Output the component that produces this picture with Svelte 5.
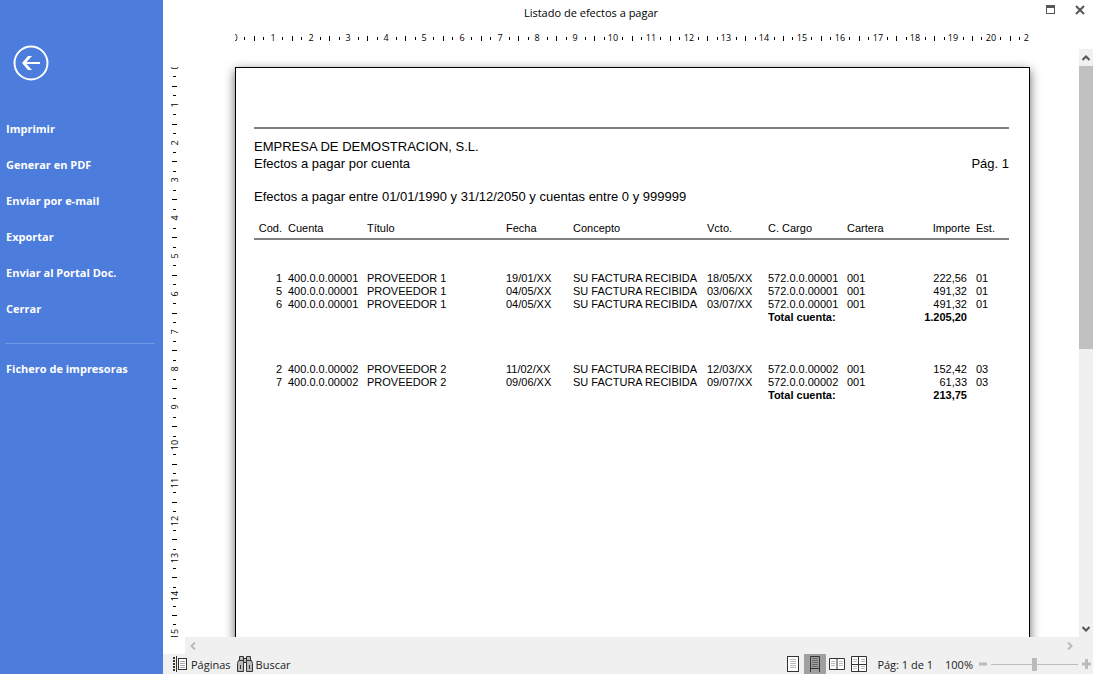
<script>
	const actions = ['Imprimir', 'Generar en PDF', 'Enviar por e-mail', 'Exportar', 'Enviar al Portal Doc.', 'Cerrar'];

	const groups = [
		{
			total: '1.205,20',
			rows: [
				['1', '400.0.0.00001', 'PROVEEDOR 1', '19/01/XX', 'SU FACTURA RECIBIDA', '18/05/XX', '572.0.0.00001', '001', '222,56', '01'],
				['5', '400.0.0.00001', 'PROVEEDOR 1', '04/05/XX', 'SU FACTURA RECIBIDA', '03/06/XX', '572.0.0.00001', '001', '491,32', '01'],
				['6', '400.0.0.00001', 'PROVEEDOR 1', '04/05/XX', 'SU FACTURA RECIBIDA', '03/07/XX', '572.0.0.00001', '001', '491,32', '01']
			]
		},
		{
			total: '213,75',
			rows: [
				['2', '400.0.0.00002', 'PROVEEDOR 2', '11/02/XX', 'SU FACTURA RECIBIDA', '12/03/XX', '572.0.0.00002', '001', '152,42', '03'],
				['7', '400.0.0.00002', 'PROVEEDOR 2', '09/06/XX', 'SU FACTURA RECIBIDA', '09/07/XX', '572.0.0.00002', '001', '61,33', '03']
			]
		}
	];

	const headings = ['Cod.', 'Cuenta', 'Título', 'Fecha', 'Concepto', 'Vcto.', 'C. Cargo', 'Cartera', 'Importe', 'Est.'];
	const columns = ['cod', 'cuenta', 'titulo', 'fecha', 'concepto', 'vcto', 'cargo', 'cartera', 'importe', 'est'];

	// one centimetre at 96 dpi
	const CM = 96 / 2.54;

	// quarter-centimetre marks; whole centimetres carry a number
	function marks(cm) {
		return Array.from({ length: cm * 4 + 1 }, (_, i) => ({
			pos: Math.round((i / 4) * CM),
			label: i % 4 === 0 ? i / 4 : null,
			half: i % 4 === 2
		}));
	}

	const across = marks(21);
	const down = marks(29);

	let zoom = $state(50);
	let view = $state(1);
</script>

<div class="window">
	<nav class="sidebar">
		<button class="back" aria-label="Volver">
			<svg width="36" height="36" viewBox="0 0 36 36" fill="none" stroke="#fff">
				<circle cx="18" cy="18" r="16.5" stroke-width="2" />
				<path d="M10.5 18H27" stroke-width="2" />
				<path d="M9 18L15 11H19L13.5 17V19L19 25H15Z" fill="#fff" stroke="none" />
			</svg>
		</button>
		<div class="actions">
			{#each actions as action}
				<button>{action}</button>
			{/each}
		</div>
		<hr />
		<button>Fichero de impresoras</button>
	</nav>

	<main>
		<header>
			<h1>Listado de efectos a pagar</h1>
			<div class="controls">
				<button aria-label="Maximizar">
					<svg width="10" height="10" viewBox="0 0 10 10"><path d="M0 0H9V9H0ZM1 3V8H8V3Z" fill="#555" fill-rule="evenodd" /></svg>
				</button>
				<button aria-label="Cerrar ventana">
					<svg width="10" height="10" viewBox="0 0 10 10"><path d="M1 1L9 9M9 1L1 9" stroke="#555" stroke-width="2" /></svg>
				</button>
			</div>
		</header>

		<div class="preview">
			<div class="ruler-top">
				<svg class="ruler" height="12">
					{#each across as m}
						{#if m.label !== null}
							<text x={m.pos} y="9" text-anchor="middle">{m.label}</text>
						{:else if m.half}
							<rect x={m.pos} y="4" width="1" height="5" />
						{:else}
							<rect x={m.pos} y="5" width="1" height="3" />
						{/if}
					{/each}
				</svg>
			</div>

			<div class="ruler-left">
				<svg width="12" height="100%">
					{#each down as m}
						{#if m.label !== null}
							<text transform="rotate(-90)" x={-m.pos} y="10" text-anchor="middle">{m.label}</text>
						{:else if m.half}
							<rect x="4" y={m.pos} width="5" height="1" />
						{:else}
							<rect x="5" y={m.pos} width="3" height="1" />
						{/if}
					{/each}
				</svg>
			</div>

			<div class="canvas">
				<article class="sheet">
					<div class="heading">
						<div>EMPRESA DE DEMOSTRACION, S.L.</div>
						<div class="subtitle">
							<span>Efectos a pagar por cuenta</span>
							<span>Pág. 1</span>
						</div>
						<div class="filter">Efectos a pagar entre 01/01/1990 y 31/12/2050 y cuentas entre 0 y 999999</div>
					</div>
					<table>
						<colgroup>
							{#each columns as column}
								<col class={column} />
							{/each}
						</colgroup>
						<thead>
							<tr>
								{#each headings as heading}
									<th>{heading}</th>
								{/each}
							</tr>
						</thead>
						{#each groups as group}
							<tbody>
								{#each group.rows as row}
									<tr>
										{#each row as cell}
											<td>{cell}</td>
										{/each}
									</tr>
								{/each}
								<tr class="total">
									<td colspan="6"></td>
									<td colspan="2">Total cuenta:</td>
									<td class="amount">{group.total}</td>
									<td></td>
								</tr>
							</tbody>
						{/each}
					</table>
				</article>
			</div>

			<div class="scroll-y">
				<button aria-label="Subir">
					<svg width="8" height="6" viewBox="0 0 8 6"><path d="M0.5 5L4 1.5L7.5 5" fill="none" stroke="#555" stroke-width="2" /></svg>
				</button>
				<div class="track"><div class="thumb"></div></div>
				<button aria-label="Bajar">
					<svg width="8" height="6" viewBox="0 0 8 6"><path d="M0.5 1L4 4.5L7.5 1" fill="none" stroke="#555" stroke-width="2" /></svg>
				</button>
			</div>
			<div class="scroll-x">
				<button aria-label="Izquierda">
					<svg width="6" height="8" viewBox="0 0 6 8"><path d="M5 0.5L1.5 4L5 7.5" fill="none" stroke="#bbb" stroke-width="2" /></svg>
				</button>
				<button aria-label="Derecha">
					<svg width="6" height="8" viewBox="0 0 6 8"><path d="M1 0.5L4.5 4L1 7.5" fill="none" stroke="#bbb" stroke-width="2" /></svg>
				</button>
			</div>
		</div>

		<footer>
			<button class="tool">
				<svg width="15" height="16" viewBox="0 0 15 16">
					<path d="M0 1H2V3H0ZM0 4H2V6H0ZM0 7H2V9H0ZM0 10H2V12H0ZM0 13H2V15H0ZM3 0H4V16H3Z" fill="#333" />
					<rect x="5.5" y="2.5" width="8" height="11" fill="#fff" stroke="#333" />
					<path d="M7 5.5H12M7 7.5H12M7 9.5H12M7 11.5H12" stroke="#aaa" />
				</svg>
				Páginas
			</button>
			<button class="tool">
				<svg width="16" height="16" viewBox="0 0 16 16" fill="#bbb" stroke="#333">
					<path d="M2.5 0.5H6.5V4.5H2.5ZM9.5 0.5H13.5V4.5H9.5ZM6.5 2.5H9.5V6.5H6.5Z" />
					<path d="M1.5 4.5H6.5V15.5H0.5V7.5ZM9.5 4.5H14.5L15.5 7.5V15.5H9.5Z" />
					<path d="M3.5 9V13M12.5 9V13" />
				</svg>
				Buscar
			</button>

			<div class="views">
				<button class:active={view === 0} onclick={() => (view = 0)} aria-label="Página completa">
					<svg width="12" height="16" viewBox="0 0 12 16">
						<rect x="0.5" y="0.5" width="11" height="15" fill="#fff" stroke="#333" />
						<path d="M3 3.5H9M3 5.5H9M3 7.5H9M3 9.5H9M3 11.5H9" stroke="#bbb" />
					</svg>
				</button>
				<button class:active={view === 1} onclick={() => (view = 1)} aria-label="Ancho de página">
					<svg width="12" height="16" viewBox="0 0 12 16">
						<path d="M1.5 16V0.5H10.5V16M1.5 12.5H10.5" fill="none" stroke="#333" />
						<path d="M3 2.5H9M3 4.5H9M3 6.5H9M3 8.5H9M3 10.5H9" stroke="#666" />
					</svg>
				</button>
				<button class:active={view === 2} onclick={() => (view = 2)} aria-label="Dos páginas">
					<svg width="16" height="16" viewBox="0 0 16 16">
						<path d="M0.5 2.5H15.5V13.5H0.5ZM8 2V14" fill="#fff" stroke="#333" />
						<path d="M2 5.5H6M2 7.5H6M2 9.5H6M10 5.5H14M10 7.5H14M10 9.5H14" stroke="#bbb" />
					</svg>
				</button>
				<button class:active={view === 3} onclick={() => (view = 3)} aria-label="Varias páginas">
					<svg width="16" height="16" viewBox="0 0 16 16">
						<path d="M0.5 0.5H15.5V15.5H0.5Z" fill="#fff" stroke="#333" />
						<path d="M2 3.5H6M2 5.5H6M10 3.5H14M10 5.5H14M2 10.5H6M2 12.5H6M10 10.5H14M10 12.5H14" stroke="#bbb" />
						<path d="M7.5 0V16M0 8.5H16" stroke="#333" />
					</svg>
				</button>
			</div>
			<span class="page-count">Pág: 1 de 1</span>
			<span class="percent">100%</span>
			<div class="zoom">
				<button aria-label="Reducir" onclick={() => (zoom -= 10)}>
					<svg width="8" height="10" viewBox="0 0 8 10"><path d="M0 5H8" stroke="#bbb" stroke-width="3" /></svg>
				</button>
				<input type="range" min="0" max="100" bind:value={zoom} aria-label="Zoom" />
				<button aria-label="Ampliar" onclick={() => (zoom += 10)}>
					<svg width="10" height="10" viewBox="0 0 10 10"><path d="M0 5H9M4.5 0V10" stroke="#bbb" stroke-width="3" /></svg>
				</button>
			</div>
		</footer>
	</main>
</div>

<style>
	:global(body) { margin: 0; }

	.window { display: grid; grid-template-columns: 163px minmax(0, 1fr); height: 100vh; overflow: hidden; background: #fff; font-family: 'Open Sans', 'Noto Sans', sans-serif; font-size: 11px; color: #222; }

	button { display: flex; align-items: center; padding: 0; border: 0; background: none; color: inherit; font: inherit; cursor: pointer; }
	svg { display: block; flex: none; }

	.sidebar { display: flex; flex-direction: column; background: #4c7cdc; color: #fff; }
	.sidebar button { height: 36px; padding: 0 6px; font-size: 11px; font-weight: 700; }
	.sidebar .back { align-self: flex-start; margin: 45px 0 29px 13px; padding: 0; }
	.sidebar hr { width: 150px; height: 1px; margin: 17px 0 6px 5px; border: 0; background: #7096e6; }

	main { display: flex; flex-direction: column; min-width: 0; min-height: 0; }

	header { display: flex; align-items: flex-start; height: 26px; }
	h1 { flex: 1; margin: 0; text-align: center; font-size: 11px; line-height: 26px; font-weight: 400; color: #000; }
	.controls { display: flex; gap: 19px; width: 47px; height: 19px; padding-left: 27px; align-items: center; }

	.preview { flex: 1; min-height: 0; display: grid; grid-template-columns: 22px minmax(0, 1fr) 14px; grid-template-rows: 23px minmax(0, 1fr) 17px; }
	.preview text { font-size: 9px; fill: #000; }
	.ruler-top { grid-column: 2; display: flex; justify-content: center; align-items: flex-start; padding-top: 6px; }
	.ruler { width: 794px; }
	.ruler-left { grid-column: 1; grid-row: 2; padding: 18px 0 0 5px; overflow: hidden; }

	.canvas { grid-column: 2; grid-row: 2; overflow: hidden; display: flex; justify-content: center; align-items: flex-start; padding: 18px 0 0 1px; }
	.sheet { box-sizing: border-box; flex: none; width: 795px; height: 1123px; padding: 59px 20px 0 18px; border: 1px solid #000; background: #fff; box-shadow: 0 3px 10px rgba(0, 0, 0, 0.6); color: #000; font-family: 'Liberation Sans', Arial, sans-serif; }
	.heading { padding-top: 9px; border-top: 2px solid #808080; font-size: 13px; line-height: 17px; }
	.subtitle { display: flex; justify-content: space-between; }
	.filter { margin-top: 16px; }

	table { width: 100%; margin-top: 17px; border-collapse: collapse; table-layout: fixed; font-size: 11px; line-height: 13px; }
	.cod { width: 34px; }
	.cuenta { width: 79px; }
	.fecha { width: 67px; }
	.concepto { width: 134px; }
	.vcto { width: 61px; }
	.cargo { width: 79px; }
	.cartera { width: 70px; }
	.importe { width: 59px; }
	.est { width: 33px; }
	th, td { padding: 0; text-align: left; font-weight: 400; white-space: nowrap; }
	th { padding-bottom: 3px; border-bottom: 2px solid #808080; }
	th:first-child, td:first-child { padding-right: 6px; text-align: right; }
	th:nth-child(9) { padding-right: 6px; text-align: right; }
	td:nth-child(9), .amount { padding-right: 9px; text-align: right; }
	tbody tr:first-child td { padding-top: 39px; }
	thead + tbody tr:first-child td { padding-top: 32px; }
	.total td { font-weight: 700; }

	.scroll-y { grid-column: 3; grid-row: 2; display: flex; flex-direction: column; background: #f0f0f0; }
	.scroll-y button { justify-content: center; height: 17px; }
	.track { flex: 1; }
	.thumb { height: 51%; background: #c0c0c0; }
	.scroll-x { grid-column: 2 / 4; grid-row: 3; display: flex; justify-content: space-between; padding: 0 20px 0 5px; background: #f0f0f0; }

	footer { display: flex; align-items: center; gap: 6px; height: 20px; padding: 0 1px 0 10px; background: #f0f0f0; }
	.tool { gap: 3px; }
	.views { display: flex; margin-left: auto; }
	.views button { justify-content: center; width: 22px; height: 20px; }
	.views .active { background: #a0a0a0; }
	.page-count { margin-left: 1px; }
	.percent { margin-left: 6px; }
	.zoom { display: flex; align-items: center; gap: 4px; }
	input[type='range'] { appearance: none; width: 87px; height: 13px; margin: 0; background: linear-gradient(#bbb, #bbb) center / 100% 1px no-repeat; }
	input[type='range']::-webkit-slider-thumb { appearance: none; width: 5px; height: 13px; background: #bbb; }
</style>
